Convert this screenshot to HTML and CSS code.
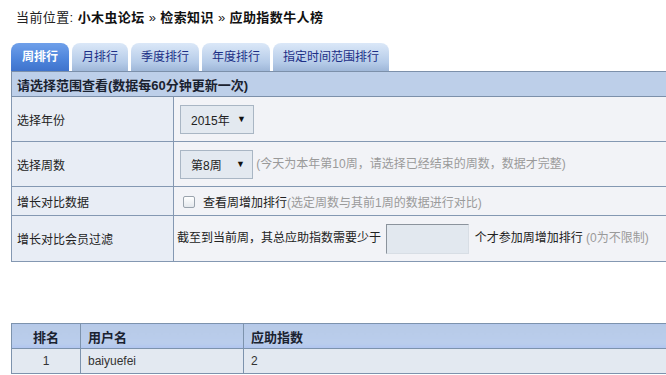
FILE: index.html
```html
<!DOCTYPE html>
<html lang="zh-CN">
<head>
    <meta charset="UTF-8">
    <title>应助指数牛人榜</title>
    <link rel="stylesheet" href="styles.css">
</head>
<body>
    <div class="crumb">当前位置: <b>小木虫论坛</b> » <b>检索知识</b> » <b>应助指数牛人榜</b></div>

    <ul class="tabs">
        <li class="on">周排行</li>
        <li>月排行</li>
        <li>季度排行</li>
        <li>年度排行</li>
        <li>指定时间范围排行</li>
    </ul>

    <table class="opts">
        <tr class="head">
            <td colspan="2">请选择范围查看(数据每60分钟更新一次)</td>
        </tr>
        <tr class="r-tall">
            <td class="lbl">选择年份</td>
            <td><span class="sel sel-year">2015年<i>▼</i></span></td>
        </tr>
        <tr class="r-tall">
            <td class="lbl">选择周数</td>
            <td><span class="sel sel-week">第8周<i>▼</i></span> <span class="tip">(今天为本年第10周，请选择已经结束的周数，数据才完整)</span></td>
        </tr>
        <tr class="r-short">
            <td class="lbl">增长对比数据</td>
            <td><span class="chk"></span>查看周增加排行<span class="tip">(选定周数与其前1周的数据进行对比)</span></td>
        </tr>
        <tr class="r-last">
            <td class="lbl">增长对比会员过滤</td>
            <td>截至到当前周，其总应助指数需要少于 <span class="num"></span> 个才参加周增加排行 <span class="tip">(0为不限制)</span></td>
        </tr>
    </table>

    <table class="rank">
        <colgroup>
            <col class="c-no">
            <col class="c-user">
            <col>
        </colgroup>
        <thead>
            <tr>
                <th class="mid">排名</th>
                <th>用户名</th>
                <th>应助指数</th>
            </tr>
        </thead>
        <tbody>
            <tr>
                <td class="mid">1</td>
                <td>baiyuefei</td>
                <td>2</td>
            </tr>
        </tbody>
    </table>
</body>
</html>
```

FILE: styles.css
```css
html, body {
    overflow: hidden;
}
body {
    margin: 0;
    padding: 0 0 0 11px;
    font-family: "Liberation Sans", "Noto Sans CJK SC", sans-serif;
    font-size: 12px;
    color: #222;
    background: #fff;
}
.crumb {
    font-size: 13px;
    line-height: 16px;
    padding: 10px 0 0 5px;
    height: 17px;
    letter-spacing: 0.4px;
}
.crumb b {
    color: #111;
}
.tabs {
    list-style: none;
    margin: 16px 0 0;
    padding: 0;
    display: flex;
    gap: 3px;
    height: 28px;
}
.tabs li {
    padding: 0 10px;
    line-height: 28px;
    font-size: 12px;
    color: #1c2f86;
    border-radius: 8px 8px 0 0;
    background: linear-gradient(#dbe8f8, #b5cbe8 70%, #9fb7d8);
}
.tabs li.on {
    padding: 0 11px;
    color: #fff;
    font-weight: bold;
    background: linear-gradient(#6fa0ea, #4d84db 60%, #3f73cc);
}
.opts, .rank {
    border-collapse: collapse;
    width: 700px;
}
.opts td {
    border: 1px solid #8498b2;
    padding: 0 0 0 5px;
    background: #f2f3f7;
}
.opts td.lbl {
    width: 156px;
    background: #e8edf5;
}
.opts .head td {
    height: 24px;
    font-size: 13px;
    font-weight: bold;
    color: #1a2230;
    background: #bdcfe9;
    border-color: #7c90aa;
}
.opts .r-tall td {
    height: 44px;
}
.opts .r-tall td:last-child {
    padding-left: 6px;
}
.opts .r-short td {
    height: 28px;
}
.opts .r-last td {
    height: 45px;
}
.opts .r-last td:last-child {
    padding-left: 3px;
}
.sel {
    display: inline-flex;
    align-items: center;
    justify-content: space-between;
    box-sizing: border-box;
    height: 29px;
    padding: 0 7px 0 10px;
    vertical-align: middle;
    background: #e3e9f0;
    border: 1px solid #a9b6c4;
    color: #222;
}
.sel i {
    font-style: normal;
    font-size: 9px;
    color: #111;
}
.sel-year {
    width: 74px;
}
.sel-week {
    width: 73px;
}
.tip {
    color: #9a9a9a;
}
.chk {
    display: inline-block;
    width: 10px;
    height: 10px;
    margin: 0 8px 0 4px;
    vertical-align: -1px;
    border: 1px solid #9aa3ad;
    border-radius: 2px;
    background: linear-gradient(#fff, #e4e8ed);
}
.num {
    display: inline-block;
    box-sizing: border-box;
    width: 83px;
    height: 30px;
    vertical-align: middle;
    margin: 0 2px;
    background: #e2e8ef;
    border: 1px solid #d8dee5;
    border-top-color: #8b939c;
    border-left-color: #8b939c;
}
.rank {
    margin-top: 61px;
    table-layout: fixed;
}
.rank col.c-no {
    width: 69px;
}
.rank col.c-user {
    width: 163px;
}
.rank th, .rank td {
    border: 1px solid #7d93ad;
    padding: 0 0 0 7px;
    text-align: left;
}
.rank th {
    height: 24px;
    font-size: 13px;
    color: #1a2230;
    background: linear-gradient(#b7cae7, #bacdec 80%, #b0c4f0);
}
.rank td {
    height: 24px;
    color: #333;
    background: #e3e9f1;
}
.rank .mid {
    text-align: center;
    padding: 0;
}
```
